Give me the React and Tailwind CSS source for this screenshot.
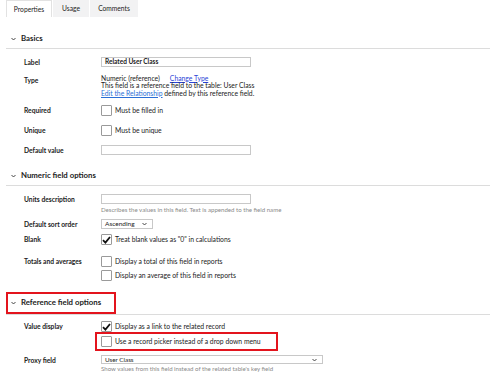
import React from "react";

const Check = ({ checked }) => (
  <span className="w-[11px] h-[11px] shrink-0 border border-[#9a9a9a] rounded-[1px] bg-white flex items-center justify-center">
    {checked && (
      <svg width="9" height="8" viewBox="0 0 9 8">
        <path d="M1 4.2 L3.4 6.6 L8 1" fill="none" stroke="#111" strokeWidth="1.8" />
      </svg>
    )}
  </span>
);

const Chevron = () => (
  <svg width="5" height="4" viewBox="0 0 5 4" className="shrink-0">
    <path d="M0.5 1 L2.5 3 L4.5 1" fill="none" stroke="#333" strokeWidth="0.9" />
  </svg>
);

const Header = ({ title, top, h }) => (
  <div className={`ml-[6px] border-b border-[#dcdcdc] flex items-center gap-[5px] pl-[5px] ${top} ${h}`}>
    <Chevron />
    <span className="text-[7.8px] font-bold text-[#222]">{title}</span>
  </div>
);

const Row = ({ label, className = "", children, align = "items-center" }) => (
  <div className={`flex pl-[24px] ${align} ${className}`}>
    <div className="w-[77px] shrink-0 text-[6.7px] font-bold text-[#222] leading-[10px]">{label}</div>
    <div className="flex-1">{children}</div>
  </div>
);

const CheckLine = ({ checked, text }) => (
  <div className="flex items-center gap-[3px] h-[11px]">
    <Check checked={checked} />
    <span className="text-[6.8px] text-[#222]">{text}</span>
  </div>
);

export default function App() {
  return (
    <div className="relative w-[490px] h-[374px] bg-white overflow-hidden font-['Lato',sans-serif] text-[#222]">
      {/* tabs */}
      <div className="flex pl-[6px] h-[17px] text-[6.7px]">
        <div className="w-[46px] border-x border-t border-[#e2e2e2] bg-white flex items-center justify-center">Properties</div>
        <div className="w-[36px] bg-[#f2f2f3] flex items-center justify-center ml-[1px]">Usage</div>
        <div className="w-[48px] bg-[#f2f2f3] flex items-center justify-center ml-[1px]">Comments</div>
      </div>

      <Header title="Basics" top="mt-[13px]" h="h-[19px]" />

      <Row label="Label" className="mt-[8px] h-[18px]" align="items-start">
        <div className="w-[150px] h-[10px] border border-[#c8c8c8] flex items-center px-[3px] text-[6.5px] font-bold">Related User Class</div>
      </Row>

      <Row label="Type" className="h-[30px]" align="items-start">
        <div className="text-[6.8px] leading-[7.5px] -mt-[0.5px]">
          <div>
            Numeric (reference)
            <span className="ml-[10px] text-[#2b44d6] underline">Change Type</span>
          </div>
          <div>This field is a reference field to the table: User Class</div>
          <div>
            <span className="text-[#2b6fd6] underline">Edit the Relationship</span> defined by this reference field.
          </div>
        </div>
      </Row>

      <Row label="Required" className="h-[20px]" align="items-start">
        <CheckLine text="Must be filled in" />
      </Row>
      <Row label="Unique" className="h-[20px]" align="items-start">
        <CheckLine text="Must be unique" />
      </Row>
      <Row label="Default value" className="h-[10px]" align="items-start">
        <div className="w-[150px] h-[10px] border border-[#c8c8c8]" />
      </Row>

      <Header title="Numeric field options" top="mt-[12px]" h="h-[19px]" />

      <Row label="Units description" className="mt-[8px] h-[25px]" align="items-start">
        <div className="w-[150px] h-[10px] border border-[#c8c8c8]" />
        <div className="text-[6.1px] text-[#8a8a8a] leading-[7px] mt-[2px] whitespace-nowrap">
          Describes the values in this field. Text is appended to the field name
        </div>
      </Row>

      <Row label="Default sort order" className="h-[15px]" align="items-start">
        <div className="w-[52px] h-[10px] border border-[#c8c8c8] flex items-center justify-between pl-[3px] pr-[5px] text-[6.5px]">
          <span>Ascending</span>
          <Chevron />
        </div>
      </Row>

      <Row label="Blank" className="h-[22px]" align="items-start">
        <CheckLine checked text={'Treat blank values as "0" in calculations'} />
      </Row>

      <Row label="Totals and averages" className="h-[24px]" align="items-start">
        <div className="flex flex-col gap-[3px]">
          <CheckLine text="Display a total of this field in reports" />
          <CheckLine text="Display an average of this field in reports" />
        </div>
      </Row>

      <Header title="Reference field options" top="mt-[11px]" h="h-[24px]" />

      <Row label="Value display" className="mt-[6px] h-[34px]" align="items-start">
        <div className="flex flex-col gap-[4px]">
          <CheckLine checked text="Display as a link to the related record" />
          <CheckLine text="Use a record picker instead of a drop down menu" />
        </div>
      </Row>

      <Row label="Proxy field" align="items-start">
        <div className="w-[222px] h-[9px] border border-[#c8c8c8] flex items-center justify-between pl-[3px] pr-[5px] text-[6.3px]">
          <span>User Class</span>
          <Chevron />
        </div>
        <div className="text-[6.1px] text-[#8a8a8a] leading-[7px] mt-[1px] whitespace-nowrap">
          Show values from this field instead of the related table's key field
        </div>
      </Row>

      {/* annotation boxes */}
      <div className="absolute left-[6px] top-[292px] w-[110px] h-[22px] border-2 border-[#e3141d]" />
      <div className="absolute left-[95px] top-[332px] w-[183px] h-[19px] border-2 border-[#e3141d]" />
    </div>
  );
}
